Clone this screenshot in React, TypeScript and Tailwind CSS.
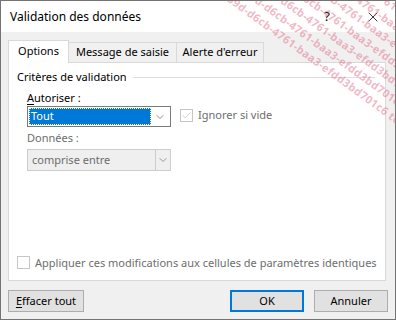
import { ChevronDown, Check, X } from 'lucide-react';

const font = { fontFamily: '"Noto Sans", "Segoe UI", sans-serif' };

const wm = 'ffa6439d-d6cb-4761-baa3-efdd3bd701c6 test v2_8 ffa6439d-d6cb-4761-baa3-efdd3bd701c6';

// watermark lines, lowest one last
const offsets = [60, 50, 40, 30, 20, 10, 0];

function Watermark() {
  return (
    <div className="pointer-events-none absolute inset-0 overflow-hidden">
      <div className="absolute left-[200px] bottom-[333px] w-[330px] origin-bottom-left rotate-[36deg] text-[11px] leading-[15px] font-bold tracking-[0.3px] text-[#e3607f]/45">
        {offsets.map((o, i) => (
          <div key={i} className="whitespace-nowrap" style={{ paddingLeft: o }}>
            {wm}
          </div>
        ))}
      </div>
    </div>
  );
}

export default function App() {
  return (
    <div
      className="relative w-[396px] h-[320px] bg-[#f0f0f0] border border-[#747474] text-[11px] text-black overflow-hidden"
      style={font}
    >
      {/* title bar */}
      <div className="h-[31px] bg-white flex items-center pl-[9px] text-[12px]">
        <span className="flex-1">Validation des données</span>
        <span className="w-[20px] text-center text-[13px] mr-[28px]">?</span>
        <X className="w-[16px] h-[16px] mr-[14px]" strokeWidth={1.2} />
      </div>

      <div className="px-[7px] pt-[7px]">
        {/* tabs */}
        <div className="flex items-end h-[23px] relative z-10">
          <div className="h-[23px] w-[61px] bg-white border border-[#d9d9d9] border-b-0 flex items-center justify-center -mb-px pb-px">
            Options
          </div>
          <div className="h-[20px] w-[108px] border-t border-r border-[#d9d9d9] flex items-center justify-center">
            Message de saisie
          </div>
          <div className="h-[20px] w-[87px] border-t border-r border-[#d9d9d9] flex items-center justify-center">
            Alerte d'erreur
          </div>
        </div>

        {/* panel */}
        <div className="h-[219px] w-[378px] bg-white border border-[#d9d9d9] px-[8px] pt-[6px] flex flex-col">
          <div className="flex items-center h-[16px]">
            <span>Critères de validation</span>
            <div className="flex-1 h-px bg-[#dcdcdc] ml-[6px] mr-[2px]" />
          </div>

          <div className="pl-[10px] mt-[5px]">
            <div className="h-[16px] leading-[16px]">
              <span className="underline underline-offset-2">A</span>utoriser :
            </div>
            <div className="flex items-center">
              <div className="w-[144px] h-[21px] border border-[#7a7a7a] bg-white flex p-px">
                <div className="flex-1 bg-[#0078d7] text-white border border-dotted border-[#ffc] flex items-center pl-[1px]">
                  Tout
                </div>
                <div className="w-[18px] flex items-center justify-center">
                  <ChevronDown className="w-[12px] h-[12px] text-[#555]" strokeWidth={1.3} />
                </div>
              </div>
              <div className="ml-[9px] -mt-[3px] w-[13px] h-[13px] border border-[#c6c6c6] flex items-center justify-center">
                <Check className="w-[11px] h-[11px] text-[#bdbdbd]" strokeWidth={1.6} />
              </div>
              <span className="ml-[5px] -mt-[3px] text-[#6d6d6d]">Ignorer si vide</span>
            </div>

            <div className="h-[16px] leading-[16px] mt-[3px] text-[#6d6d6d]">Données :</div>
            <div className="mt-[3px] w-[144px] h-[22px] border border-[#cccccc] bg-[#efefef] flex">
              <div className="flex-1 flex items-center pl-[4px] text-[#6d6d6d]">comprise entre</div>
              <div className="w-[15px] border-l border-[#cccccc] flex items-center justify-center">
                <ChevronDown className="w-[12px] h-[12px] text-[#666]" strokeWidth={1.3} />
              </div>
            </div>
          </div>

          <div className="mt-auto mb-[9px] flex items-center">
            <div className="w-[13px] h-[13px] border border-[#c6c6c6] bg-white" />
            <span className="ml-[5px] text-[#6d6d6d] whitespace-nowrap">
              Appliquer ces modifications aux cellules de paramètres identiques
            </span>
          </div>
        </div>

        {/* buttons */}
        <div className="flex items-center mt-[9px]">
          <button className="w-[76px] h-[22px] bg-[#e1e1e1] border border-[#adadad] flex items-center justify-center">
            <span><span className="underline underline-offset-2">E</span>ffacer tout</span>
          </button>
          <div className="flex-1" />
          <button className="w-[74px] h-[22px] bg-[#e1e1e1] border-2 border-[#0078d7] flex items-center justify-center">
            OK
          </button>
          <button className="ml-[10px] w-[74px] h-[22px] bg-[#e1e1e1] border border-[#adadad] flex items-center justify-center">
            Annuler
          </button>
        </div>
      </div>

      <Watermark />
    </div>
  );
}
